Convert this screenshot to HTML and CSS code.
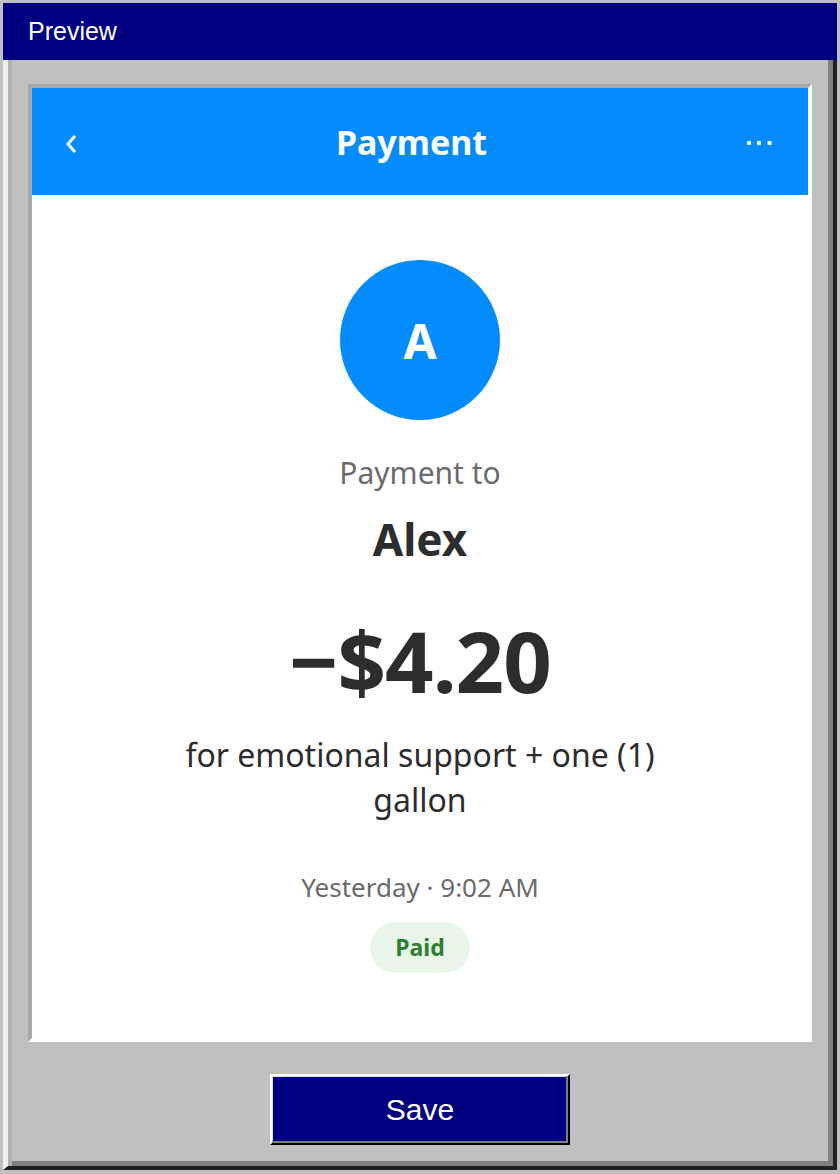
FILE: index.html
```html
<!DOCTYPE html>
<html>
<head>
<meta charset="utf-8">
<title>Preview</title>
<link rel="stylesheet" href="styles.css">
</head>
<body>

<div class="window">
  <div class="titlebar">Preview</div>

  <div class="frame">
    <div class="panel">
      <div class="appbar">
        <svg class="back" width="10" height="18" viewBox="0 0 10 18">
          <polyline points="8,2 2,9 8,16" fill="none" stroke="#fff" stroke-width="3" stroke-linecap="square" stroke-linejoin="miter"/>
        </svg>
        <h1>Payment</h1>
        <svg class="more" width="25" height="4" viewBox="0 0 25 4">
          <rect x="0" y="0" width="4" height="4" rx="0.8" fill="#fff"/>
          <rect x="10" y="0" width="4" height="4" rx="0.8" fill="#fff"/>
          <rect x="20.5" y="0" width="4" height="4" rx="0.8" fill="#fff"/>
        </svg>
      </div>

      <div class="detail">
        <div class="avatar">A</div>
        <div class="label">Payment to</div>
        <div class="name">Alex</div>
        <div class="amount">&minus;$4.20</div>
        <div class="note">for emotional support + one (1) gallon</div>
        <div class="time">Yesterday &middot; 9:02 AM</div>
        <div class="status">Paid</div>
      </div>
    </div>

    <div class="actions">
      <button class="save">Save</button>
    </div>
  </div>
</div>

</body>
</html>
```

FILE: styles.css
```css
html, body { margin:0; }
body { background:#c0c0c0; padding:3px; height:1174px; box-sizing:border-box; font-family:"Noto Sans", "Open Sans", sans-serif; }

.window { height:1167px; display:flex; flex-direction:column; }
.titlebar { height:57px; line-height:57px; background:#000080; color:#fff; padding-left:25px; font-family:"Liberation Sans", Arial, sans-serif; font-size:25px; }

.frame { flex:1; display:flex; flex-direction:column; background:#c0c0c0; padding:24px 21px 0 20px;
  border-left:5px solid #f0f0f0; border-right:4px solid #222; border-bottom:4px solid #222;
  box-shadow:inset 4px 0 0 #b0b0b0, inset -5px -5px 0 #808080; }

.panel { flex:1; background:#fff; border:4px solid; border-color:#a8a8a8 #fff #fff #a8a8a8; display:flex; flex-direction:column; }

.appbar { height:107px; background:#038cff; display:flex; justify-content:space-between; align-items:center; padding:0 36px 0 34px; }
.appbar h1 { margin:0; color:#fff; font-size:34px; font-weight:700; }
.appbar .back { margin-top:4px; }
.appbar .more { margin-top:2px; }

.detail { display:flex; flex-direction:column; align-items:center; text-align:center; padding-top:65px; color:#2d2d2d; }
.avatar { width:160px; height:160px; border-radius:50%; background:#038cff; color:#fff; font-size:48px; font-weight:700; display:flex; align-items:center; justify-content:center; }
.label { margin-top:33px; font-size:30px; line-height:40px; color:#6b6b6b; }
.name { margin-top:21px; font-size:44px; line-height:50px; font-weight:700; }
.amount { margin-top:46px; font-size:85px; line-height:100px; font-weight:700; letter-spacing:-1px; }
.note { margin-top:22px; max-width:540px; font-size:32px; line-height:45px; }
.time { margin-top:49px; font-size:26px; line-height:32px; color:#6b6b6b; }
.status { margin-top:19px; width:100px; height:51px; line-height:51px; border-radius:26px; background:#e8f5e9; color:#2e7d32; font-size:23px; font-weight:700; }

.actions { display:flex; justify-content:center; padding:32px 0 21px; }
.save { width:300px; height:71px; background:#000080; color:#fff; font-family:"Liberation Sans", Arial, sans-serif; font-size:30px;
  border:2px solid; border-color:#fff #000 #000 #fff; box-shadow:inset -2px -2px 0 #808080, inset 1px 1px 0 #dfdfdf; padding:0; }
```
